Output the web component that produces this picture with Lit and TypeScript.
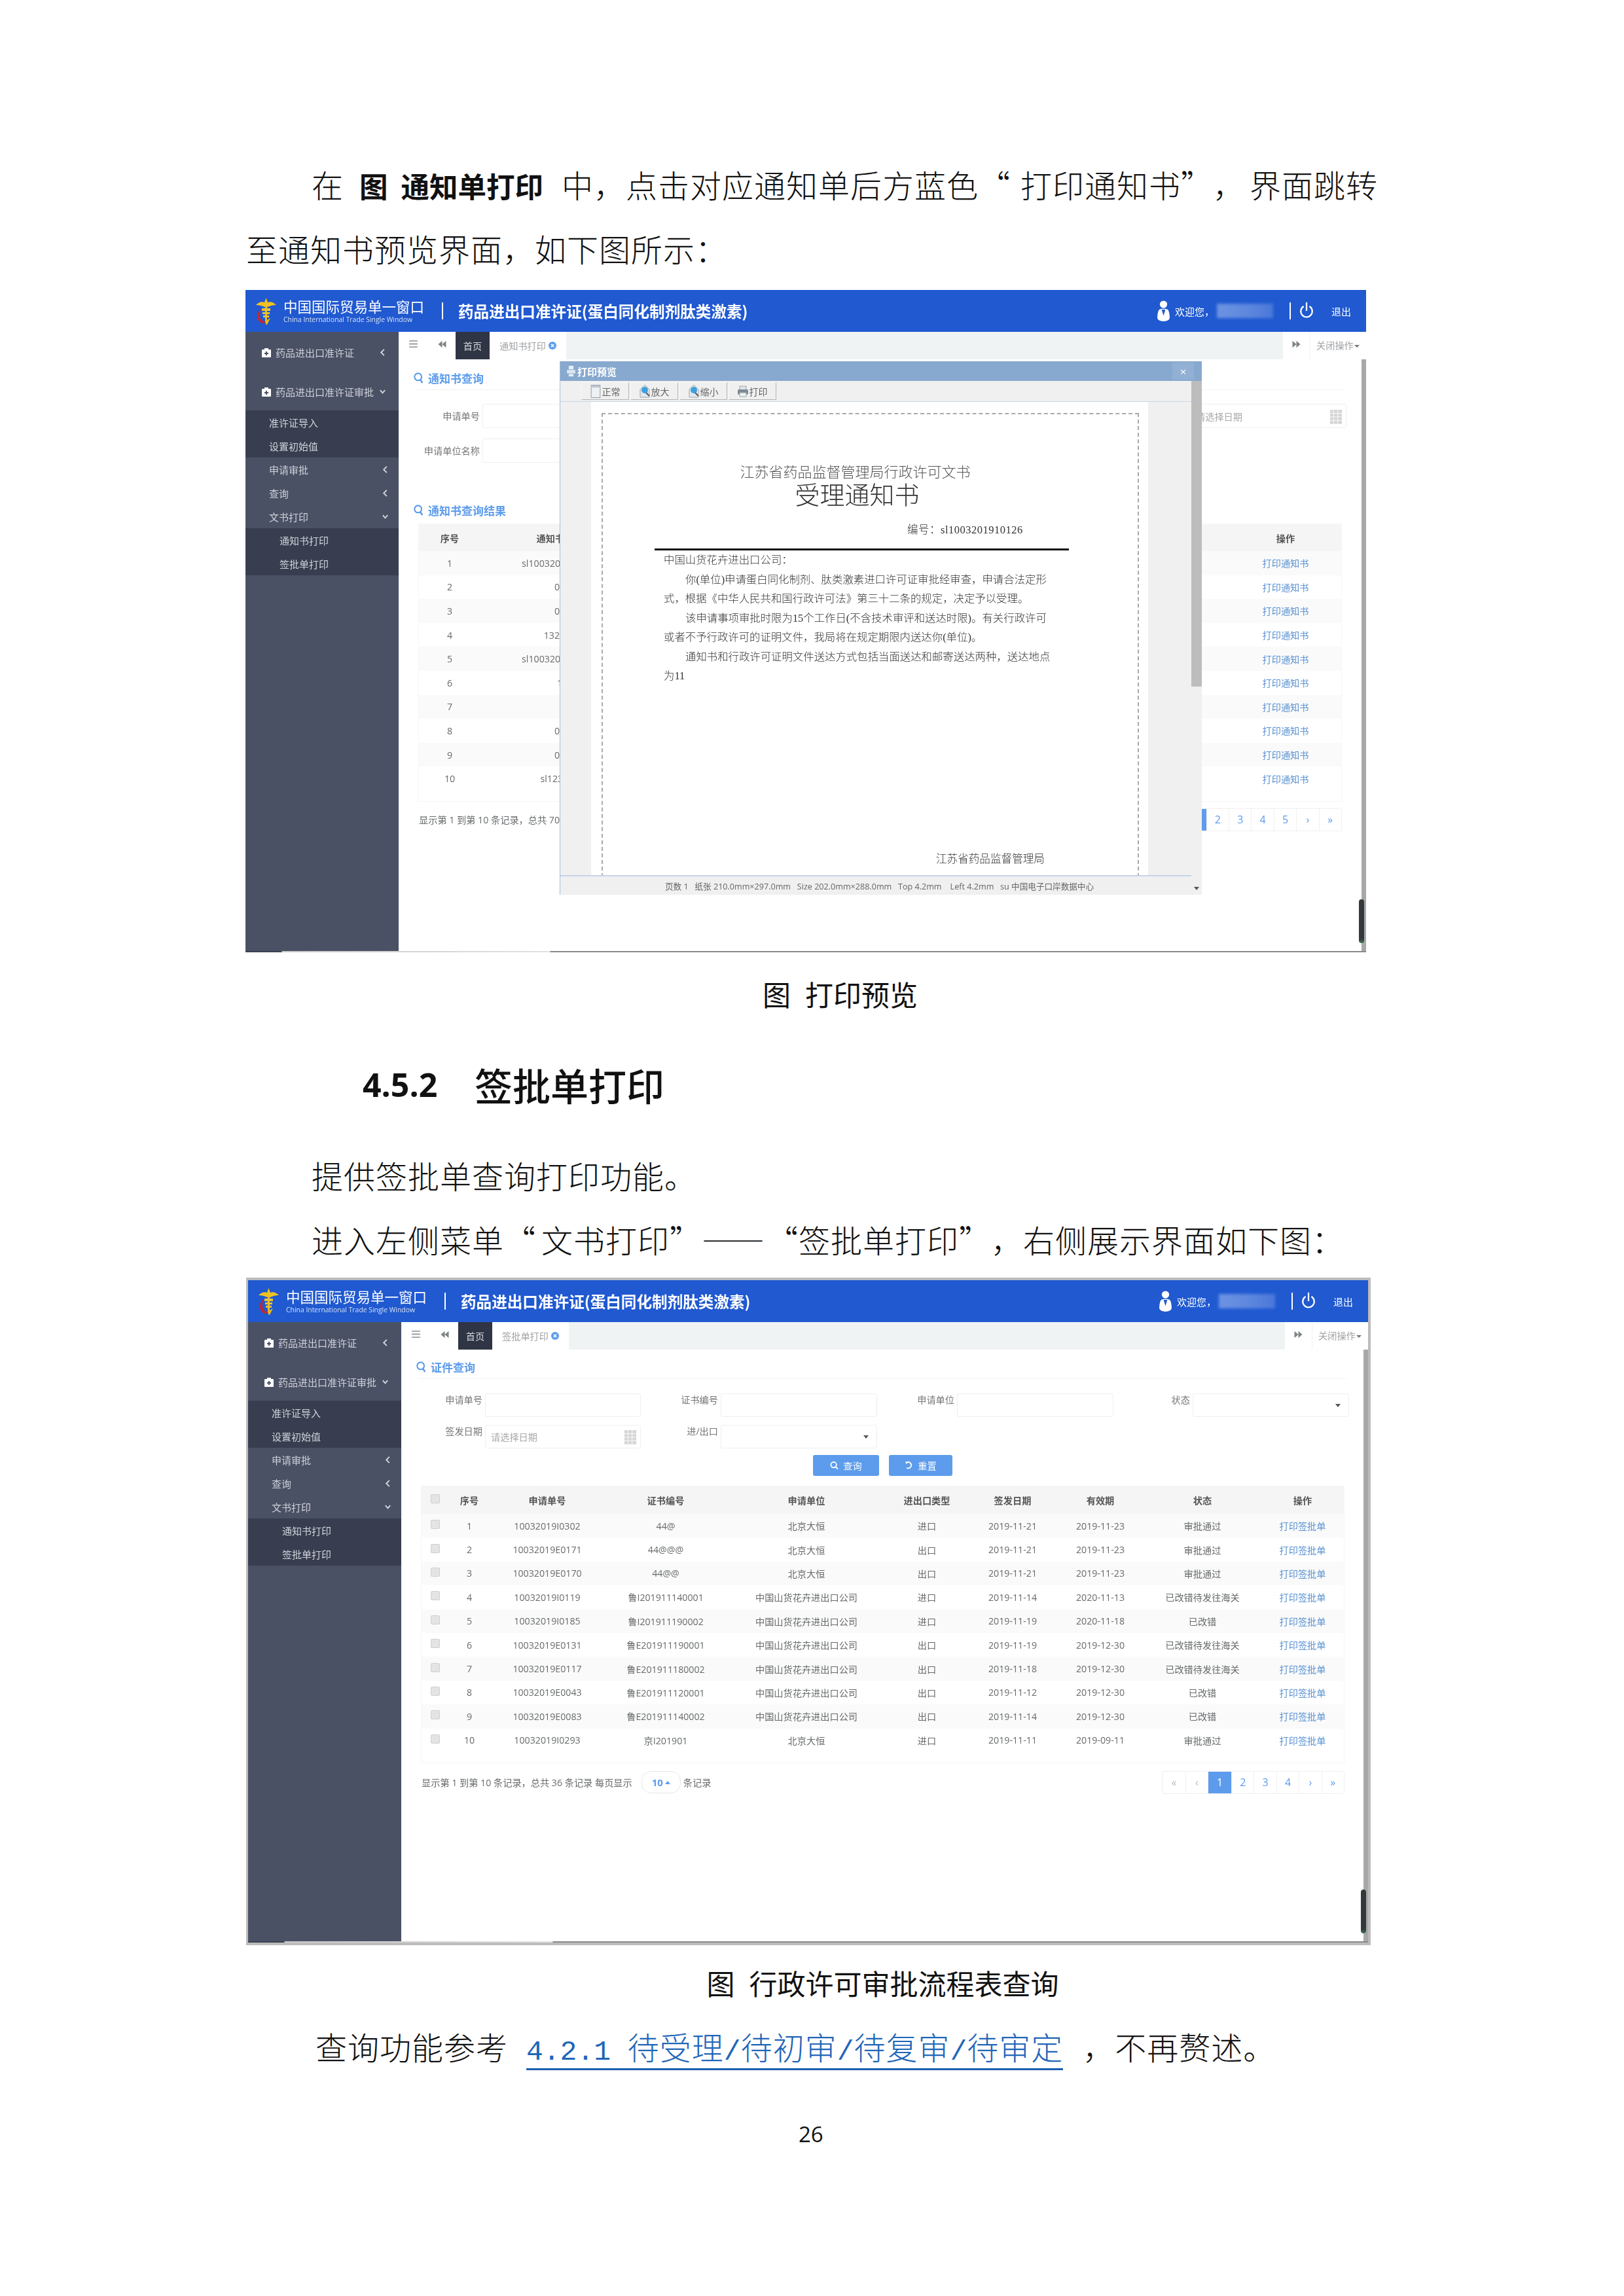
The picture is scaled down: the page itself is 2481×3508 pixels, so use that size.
import { LitElement, html, css } from "lit";
import { customElement } from "lit/decorators.js";

const logo = html`<svg class="logo" viewBox="0 0 31 41">
  <path d="M15.5 0 L18 7 C22 5 27 7 31 11 C26 11 22 12 18 14 L13 14 C9 12 5 11 0 11 C4 7 9 5 13 7 Z" fill="#f2c21f"/>
  <path d="M14 12 h3 v26 h-3z" fill="#e9b91d"/>
  <path d="M9 16 h13 v4 h-13z M10 22 h11 v3 h-11z M11 27 h9 v3 h-9z" fill="#e8c23a"/>
  <path d="M8 17 C1 22 0 32 6 37 C10 40 14 39 17 36 C12 37 8 35 6.5 31 C5 26 6 21 8 17Z" fill="#c9252d"/>
  <path d="M22 31 L14 36 L15.5 41 L17 41 Z" fill="#e9b91d"/>
</svg>`;
const kit = html`<svg class="kit" viewBox="0 0 14 15"><path d="M4 3 V1 h6 v2 h3 a1 1 0 0 1 1 1 v10 a1 1 0 0 1 -1 1 H1 a1 1 0 0 1 -1 -1 V4 a1 1 0 0 1 1 -1z" fill="#fff"/><path d="M6 6 h2 v2 h2 v2 H8 v2 H6 v-2 H4 V8 h2z" fill="#4b5165"/></svg>`;
const left = html`<svg class="chev" viewBox="0 0 10 14"><path d="M7.5 2 L2.5 7 L7.5 12" fill="none" stroke="#d5d7de" stroke-width="2"/></svg>`;
const down = html`<svg class="chev" viewBox="0 0 12 10"><path d="M2 2.5 L6 7 L10 2.5" fill="none" stroke="#d5d7de" stroke-width="2"/></svg>`;
const mag = html`<svg class="mag" viewBox="0 0 18 22"><circle cx="8" cy="9" r="6.5" fill="none" stroke="#5d9cec" stroke-width="2.6"/><path d="M12 14 L16 20" stroke="#5d9cec" stroke-width="3"/></svg>`;
const burger = html`<svg class="burger" viewBox="0 0 14 12"><path d="M0 1 h14 M0 6 h14 M0 11 h14" stroke="#9a9ea3" stroke-width="2"/></svg>`;
const back = html`<svg class="dbl" viewBox="0 0 14 14"><path d="M7 1 V13 L0 7z M14 1 V13 L7 7z" fill="#7e8488"/></svg>`;
const fwd = html`<svg class="dbl" viewBox="0 0 14 14"><path d="M0 1 V13 L7 7z M7 1 V13 L14 7z" fill="#7e8488"/></svg>`;
const user = html`<svg class="user" viewBox="0 0 20 34"><circle cx="10" cy="6.5" r="6" fill="#fff"/><path d="M3 15 C6 13 14 13 17 15 C19 17 20 24 20 28 C20 32 15 34 10 34 C5 34 0 32 0 28 C0 24 1 17 3 15Z" fill="#fff"/><path d="M7 15 L10 25 L13 15" fill="#2059d0"/></svg>`;
const power = html`<svg class="power" viewBox="0 0 24 32"><path d="M7 8 A10 10 0 1 0 17 8" fill="none" stroke="#fff" stroke-width="2.6"/><path d="M12 1 V16" stroke="#fff" stroke-width="2.6"/></svg>`;
const cal = html`<svg class="cal" viewBox="0 0 20 26"><path d="M0 2 h20 v24 h-20z" fill="#d5d5d5"/><path d="M0 8 h20 M0 14 h20 M0 20 h20 M6 2 v24 M13 2 v24" stroke="#f4f4f4" stroke-width="1.4"/></svg>`;
const xdot = html`<svg class="xdot" viewBox="0 0 12 12"><circle cx="6" cy="6" r="6" fill="#5d9cec"/><path d="M3.8 3.8 L8.2 8.2 M8.2 3.8 L3.8 8.2" stroke="#fff" stroke-width="1.6"/></svg>`;
const printer = html`<svg class="tbi" viewBox="0 0 16 18"><rect x="3" y="1" width="10" height="6" fill="#dfe3e8" stroke="#9aa" /><rect x="0" y="6" width="16" height="8" rx="2" fill="#7d8a96"/><rect x="3" y="11" width="10" height="6" fill="#eef0f2" stroke="#9aa"/></svg>`;
const pageIco = html`<svg class="tbi" viewBox="0 0 16 22"><rect x=".5" y=".5" width="15" height="21" fill="#eef1f4" stroke="#8b96a3"/><path d="M0 3 h16" stroke="#b8c2cc" stroke-width="3"/></svg>`;
const zoomIco = html`<svg class="tbi" viewBox="0 0 16 20"><path d="M1 7 L8 0 L15 7 V19 H1z" fill="#e3e7ec" stroke="#9aa"/><circle cx="8" cy="8" r="5" fill="#3f9fe0"/><path d="M10 12 L15 17" stroke="#555" stroke-width="2"/></svg>`;
const titlePrint = html`<svg class="tprint" viewBox="0 0 14 20"><rect x="3" y="1" width="8" height="6" fill="#e8eef6"/><rect x="0" y="8" width="14" height="6" fill="#dbe6f3"/><rect x="3" y="15" width="8" height="4" fill="#e8eef6"/></svg>`;

const row1 = ["sl1003201910126", "01", "02", "132456", "sl1003201910126", "1", "", "03", "04", "sl123456"];

const row2 = [
  ["10032019I0302", "44@", "北京大恒", "进口", "2019-11-21", "2019-11-23", "审批通过"],
  ["10032019E0171", "44@@@", "北京大恒", "出口", "2019-11-21", "2019-11-23", "审批通过"],
  ["10032019E0170", "44@@", "北京大恒", "出口", "2019-11-21", "2019-11-23", "审批通过"],
  ["10032019I0119", "鲁I201911140001", "中国山货花卉进出口公司", "进口", "2019-11-14", "2020-11-13", "已改错待发往海关"],
  ["10032019I0185", "鲁I201911190002", "中国山货花卉进出口公司", "进口", "2019-11-19", "2020-11-18", "已改错"],
  ["10032019E0131", "鲁E201911190001", "中国山货花卉进出口公司", "出口", "2019-11-19", "2019-12-30", "已改错待发往海关"],
  ["10032019E0117", "鲁E201911180002", "中国山货花卉进出口公司", "出口", "2019-11-18", "2019-12-30", "已改错待发往海关"],
  ["10032019E0043", "鲁E201911120001", "中国山货花卉进出口公司", "出口", "2019-11-12", "2019-12-30", "已改错"],
  ["10032019E0083", "鲁E201911140002", "中国山货花卉进出口公司", "出口", "2019-11-14", "2019-12-30", "已改错"],
  ["10032019I0293", "京I201901", "北京大恒", "进口", "2019-11-11", "2019-09-11", "审批通过"],
];
const head2 = ["序号", "申请单号", "证书编号", "申请单位", "进出口类型", "签发日期", "有效期", "状态", "操作"];

@customElement("app-root")
export class AppRoot extends LitElement {
  static styles = css`
    :host { display: block; width: 2481px; height: 3508px; background: #fff; overflow: hidden;
      font-family: "Noto Sans CJK SC", sans-serif; color: #111; }
    * { box-sizing: border-box; }
    .page { display: flex; flex-direction: column; padding-top: 232px; }
    .p { font-size: 48px; letter-spacing: 1px; line-height: 98px; height: 98px; margin-left: 476px; white-space: nowrap; font-weight: 300; text-spacing-trim: space-all; }
    .p.flush { margin-left: 376px; }
    .p b { font-size: 43.5px; letter-spacing: 0; font-weight: 700; }
    .g1 { margin: 0 20px 0 24px; }
    .g2 { margin-right: 28px; }
    .q1 { letter-spacing: 16px; }
    .q2 { letter-spacing: 9px; }
    .q3 { letter-spacing: 8px; }
    .q4 { letter-spacing: 3px; }
    .cap { font-size: 43px; line-height: 60px; height: 60px; text-align: center; white-space: nowrap; }
    .cap i { font-style: normal; margin-right: 22px; }
    .cap.a { margin: 33px 0 0 0; padding-left: 86px; width: 2481px; }
    .cap.b { margin: 27px 0 0 0; padding-left: 216px; width: 2481px; }
    .h { display: flex; align-items: center; height: 80px; margin: 69px 0 49px 554px; }
    .h .n { font: 700 50px "Open Sans", sans-serif; width: 171px; }
    .h .t { font: 500 58px/80px "Noto Sans CJK SC", sans-serif; }
    .last { margin: 37px 0 0 482px; font-size: 48px; font-weight: 300; line-height: 60px; height: 60px; letter-spacing: 1px; white-space: nowrap; text-spacing-trim: space-all; }
    .last a { color: #1f66b8; text-decoration: none; border-bottom: 3px solid #1a5fb0; padding-bottom: 1px; margin: 0 30px 0 28px; display: inline-block; line-height: 46px; }
    .last .m { font-family: "Liberation Mono", monospace; font-size: 43px; letter-spacing: 0; }
    .pn { margin: 85px 0 0 1220px; font: 33px/40px "Open Sans", sans-serif; }

    /* screenshot */
    .shot { position: relative; width: 1712px; display: flex; flex-direction: column; background: #fff; filter: blur(0.55px);
      font-family: "Open Sans", "Noto Sans CJK SC", sans-serif; font-size: 14.2px; color: #676a6c; }
    .frame1 { margin: 15px 0 0 375px; }
    .frame2 { margin: 10px 0 0 376px; width: 1718px; border: solid #bcbcbc; border-width: 4px 4px 4px 3px; }
    .frame2 .shot { margin: 0; width: 1711px; }
    .frame2 .content { padding-top: 12px; }
    .frame2 .foot { margin-top: 12px; }
    .hdr { height: 64px; background: #2059d0; display: flex; align-items: center; padding: 0 23px 0 16px; color: #fff; flex: none; }
    .logo { width: 31px; height: 41px; margin-right: 11px; }
    .brand { display: flex; flex-direction: column; width: 242px; }
    .brand b { font: 400 21.5px/26px "Noto Sans CJK SC", sans-serif; white-space: nowrap; }
    .brand span { font-size: 10.4px; line-height: 14px; white-space: nowrap; color: #d5e0f6; }
    .vs { width: 2px; height: 26px; background: #fff; }
    .t2 { font: 700 23.6px/30px "Noto Sans CJK SC", sans-serif; margin-left: 23px; white-space: nowrap; }
    .hr { margin-left: auto; display: flex; align-items: center; font-size: 15px; }
    .user { width: 19px; height: 32px; margin-right: 8px; }
    .name { width: 86px; height: 22px; margin: 0 25px 0 4px; background: linear-gradient(90deg,#6d93e2,#5c86dd 60%,#4a78da); filter: blur(2px); }
    .power { width: 22px; height: 28px; margin: 0 27px 0 13px; }
    .bodyr { display: flex; height: 946px; }
    .side { width: 234px; background: #4b5165; color: #ced1d9; flex: none; font-size: 15px; }
    .si { display: flex; align-items: center; height: 36px; padding-left: 36px; white-space: nowrap; position: relative; }
    .si .chev { margin-left: auto; margin-right: 15px; }
    .si.top { padding-left: 25px; height: 62px; }
    .si.top.b { height: 58px; }
    .si.top .chev { margin-right: 19px; }
    .si.sub { padding-left: 52px; }
    .dark { background: #383e4f; }
    .kit { width: 14px; height: 15px; margin-right: 7px; flex: none; }
    .chev { width: 11px; height: 13px; flex: none; }
    .main { flex: 1; min-width: 0; position: relative; display: flex; flex-direction: column; }
    .tabs { height: 42px; display: flex; background: #f0f3f4; flex: none; }
    .tabl { width: 87px; background: #fff; display: flex; align-items: flex-start; padding-top: 12px; }
    .burger { width: 13px; height: 11px; margin: 1px 0 0 16px; }
    .dbl { width: 13px; height: 12px; margin: 1px 0 0 31px; }
    .tab { display: flex; align-items: center; justify-content: center; }
    .tab.home { width: 52px; background: #2f3545; color: #d5d7dc; }
    .tab.cur { width: 117px; background: #fff; color: #a0a3a6; gap: 4px; }
    .xdot { width: 12px; height: 12px; }
    .tabr { margin-left: auto; width: 127px; background: #fff; display: flex; align-items: center; color: #a0a3a6; }
    .tabr .dbl { margin: 0 14px 4px 14px; }
    .tabr span { border-left: 1px solid #f0f0f0; height: 42px; line-height: 42px; padding-left: 9px; white-space: nowrap; }
    .caret { display: inline-block; border: 4px solid transparent; border-top-color: #777; border-bottom: 0; vertical-align: middle; margin-left: 1px; }
    .content { flex: 1; display: flex; flex-direction: column; padding: 14px 37px 0 0; }
    .sh { display: flex; align-items: center; margin: 0 -4px 0 26px; height: 33px; border-bottom: 1px solid #f3f3f3; color: #5d9cec; font-size: 17px; font-weight: 700; padding: 0 0 4px 0; }
    .sh.np { border: 0; height: 30px; padding-bottom: 0; margin-top: 57px; margin-bottom: 6px; }
    .mag { width: 15px; height: 19px; margin: 0 7px 0 -3px; }
    .form { display: grid; grid-template-columns: 124px 238px 114px 239px 114px 239px 113px 239px; column-gap: 4px; }
    .f1 { margin-top: 21px; row-gap: 16px; grid-auto-rows: 37px; align-items: center; }
    .f2 { margin-top: 22px; row-gap: 12px; grid-auto-rows: 36px; align-items: start; }
    .lab { text-align: right; white-space: nowrap; line-height: 20px; color: #777; }
    .inp { height: 100%; border: 1px solid #efefef; border-radius: 3px; display: flex; align-items: center; padding: 0 6px 0 8px; color: #a9a9a9; white-space: nowrap; justify-content: space-between; }
    .f2 .inp { height: 36px; }
    .cal { width: 18px; height: 24px; }
    .arr { margin-left: auto; margin-right: 6px; display: block; border: 4px solid transparent; border-top: 5px solid #555; border-bottom: 0; }
    .btns { display: flex; justify-content: center; gap: 15px; margin: 10px 0 15px 31px; }
    .btn { height: 32px; border-radius: 3px; background: #5d9cec; color: #fff; display: flex; align-items: center; justify-content: center; gap: 7px; }
    .btn.q { width: 101px; } .btn.r { width: 97px; }
    .btn svg { width: 13px; height: 14px; }
    .tbl { margin-left: 30px; width: 1411px; border: 1px solid #f6f6f6; padding-bottom: 16px; flex: none; }
    .tr { display: grid; align-items: center; text-align: center; white-space: nowrap; }
    .tr > span { overflow: hidden; }
    .t-a .tr { grid-template-columns: 94px 242px 1fr 170px; height: 36.6px; }
    .t-b .tr { grid-template-columns: 40px 66px 172px 190px 240px 128px 134px 134px 178px 128px; height: 36.4px; }
    .tr.hd { background: #f5f5f5; font-weight: 700; color: #555; height: 41px !important; }
    .t-b .tr.hd { height: 42px !important; }
    .tr.odd { background: #fafafa; }
    .lnk { color: #5b93d3; }
    .cb { width: 14px; height: 14px; background: #e4e4e4; border: 1px solid #d0d0d0; border-radius: 2px; justify-self: center; margin: 0 0 4px 2px; display: block; }
    .foot { display: flex; justify-content: space-between; align-items: center; margin: 10px 0 0 31px; width: 1410px; height: 35px; white-space: nowrap; }
    .fl { display: flex; align-items: center; }
    .ps { display: flex; align-items: center; justify-content: center; width: 60px; height: 34px; border: 1px solid #e6e6e6; border-radius: 15px; margin: 0 4px 0 14px; color: #5d9cec; font-weight: 700; gap: 3px; font-size: 15px; }
    .up { border: 4px solid transparent; border-bottom: 5px solid #5d9cec; border-top: 0; }
    .pager { display: flex; border: 1px solid #efefef; border-radius: 3px; height: 35px; }
    .pager span { width: 34.4px; display: flex; align-items: center; justify-content: center; color: #5d9cec; border-left: 1px solid #f0f0f0; font-size: 16px; }
    .pager span:first-child { border-left: 0; }
    .pager .dim { color: #b9b9b9; }
    .pager .on { background: #5d9cec; color: #fff; width: 36px; }
    .track { position: absolute; right: 0; top: 42px; bottom: 0; width: 7px; background: #a8a8a8; }
    .thumb { position: absolute; right: 3px; bottom: 12px; width: 8px; height: 67px; border-radius: 4px; background: linear-gradient(#33383a 90%, #3f7a52); }
    .bline { height: 2px; background: linear-gradient(90deg,#3c4252 0,#3c4252 55px,#c8c8c8 56px,#e2e2e2 465px,#8a8a8a 466px); flex: none; }

    /* modal */
    .modal { position: absolute; left: 480px; top: 109px; width: 981px; height: 815px; display: flex; flex-direction: column; z-index: 2; border-left: 1px solid #a6bfdc; background: #f0f0f0; }
    .mt { height: 30px; background: #88a9cf; color: #fff; display: flex; align-items: center; font-weight: 700; font-size: 15px; padding-left: 10px; flex: none; }
    .tprint { width: 13px; height: 18px; margin-right: 3px; }
    .mx { margin-left: auto; margin-right: 12px; width: 33px; height: 26px; background: #92b0d3; display: flex; align-items: center; justify-content: center; font-weight: 400; font-size: 17px; }
    .mr { flex: 1; display: flex; min-height: 0; }
    .mc { flex: 1; display: flex; flex-direction: column; min-width: 0; }
    .bar { width: 16px; background: #f0f0f0; flex: none; display: flex; flex-direction: column; }
    .bar i { display: block; height: 467px; background: #bdbdbd; }
    .bar em { margin: auto auto 7px; border: 4px solid transparent; border-top: 5px solid #555; border-bottom: 0; }
    .tb { height: 32px; border-bottom: 1px solid #c6d4e5; display: flex; align-items: center; padding-left: 32px; gap: 2px; flex: none; }
    .tbb { width: 73px; height: 27px; display: flex; align-items: center; justify-content: center; gap: 2px; border: 1px solid; border-color: #f8f8f8 #b5b5b5 #b5b5b5 #f8f8f8; color: #666; font-size: 14px; }
    .tbi { width: 16px; height: 20px; }
    .mv { flex: 1; display: flex; min-height: 0; padding: 0 66px 0 47px; }
    .pg { flex: 1; background: #fff; overflow: hidden; padding: 17px 14px 0 16px; }
    .dash { border: 2px dashed #a9a9a9; border-bottom: 0; height: 900px; padding: 74px 0 0 79px; font-family: "Liberation Serif", "Noto Sans CJK SC", serif; color: #333; font-weight: 300; }
    .d1 { font-size: 22px; line-height: 30px; width: 613px; text-align: center; white-space: nowrap; color: #555; }
    .d2 { font-size: 38px; line-height: 44px; width: 619px; text-align: center; margin-top: -2px; color: #333; }
    .d3 { margin: 21px 0 0 386px; font-size: 16.5px; letter-spacing: .5px; line-height: 20px; white-space: nowrap; }
    .drule { margin-top: 18px; width: 633px; height: 3px; background: #111; }
    .dl { margin-left: 14px; font-size: 16.4px; line-height: 29.5px; white-space: nowrap; }
    .dl.in { margin-left: 47px; }
    .d9 { margin: 255px 0 0 430px; font-size: 16.6px; line-height: 20px; white-space: nowrap; }
    .ms { height: 30px; border-top: 2px solid #c6d4e5; display: flex; align-items: center; padding-left: 160px; color: #666; font-size: 12.6px; white-space: pre; flex: none; }
  `;

  private sidebar() {
    return html`<nav class="side">
      <div class="si top">${kit}药品进出口准许证${left}</div>
      <div class="si top b">${kit}药品进出口准许证审批${down}</div>
      <div class="dark"><div class="si">准许证导入</div><div class="si">设置初始值</div></div>
      <div class="si">申请审批${left}</div>
      <div class="si">查询${left}</div>
      <div class="si">文书打印${down}</div>
      <div class="dark"><div class="si sub">通知书打印</div><div class="si sub">签批单打印</div></div>
    </nav>`;
  }
  private header() {
    return html`<header class="hdr">
      ${logo}
      <div class="brand"><b>中国国际贸易单一窗口</b><span>China International Trade Single Window</span></div>
      <div class="vs"></div>
      <div class="t2">药品进出口准许证(蛋白同化制剂肽类激素)</div>
      <div class="hr">${user}<span>欢迎您，</span><div class="name"></div><div class="vs"></div>${power}<span>退出</span></div>
    </header>`;
  }
  private tabs(name: string) {
    return html`<div class="tabs">
      <div class="tabl">${burger}${back}</div>
      <div class="tab home">首页</div>
      <div class="tab cur">${name}${xdot}</div>
      <div class="tabr">${fwd}<span>关闭操作<i class="caret"></i></span></div>
    </div>`;
  }
  private modal() {
    return html`<section class="modal">
      <div class="mt">${titlePrint}打印预览<span class="mx">×</span></div>
      <div class="mr">
        <div class="mc">
          <div class="tb">
            <div class="tbb">${pageIco}正常</div><div class="tbb">${zoomIco}放大</div>
            <div class="tbb">${zoomIco}缩小</div><div class="tbb">${printer}打印</div>
          </div>
          <div class="mv"><div class="pg"><div class="dash">
            <div class="d1">江苏省药品监督管理局行政许可文书</div>
            <div class="d2">受理通知书</div>
            <div class="d3">编号：sl1003201910126</div>
            <div class="drule"></div>
            <div class="dl">中国山货花卉进出口公司：</div>
            <div class="dl in">你(单位)申请蛋白同化制剂、肽类激素进口许可证审批经审查，申请合法定形</div>
            <div class="dl">式，根据《中华人民共和国行政许可法》第三十二条的规定，决定予以受理。</div>
            <div class="dl in">该申请事项审批时限为15个工作日(不含技术审评和送达时限)。有关行政许可</div>
            <div class="dl">或者不予行政许可的证明文件，我局将在规定期限内送达你(单位)。</div>
            <div class="dl in">通知书和行政许可证明文件送达方式包括当面送达和邮寄送达两种，送达地点</div>
            <div class="dl">为11</div>
            <div class="d9">江苏省药品监督管理局</div>
          </div></div></div>
          <div class="ms">页数 1   纸张 210.0mm×297.0mm   Size 202.0mm×288.0mm   Top 4.2mm    Left 4.2mm   su 中国电子口岸数据中心</div>
        </div>
        <div class="bar"><i></i><em></em></div>
      </div>
    </section>`;
  }
  private first() {
    return html`<div class="shot frame1">
      ${this.header()}
      <div class="bodyr">
        ${this.sidebar()}
        <div class="main">
          ${this.tabs("通知书打印")}
          <div class="content">
            <div class="sh">${mag}通知书查询</div>
            <div class="form f1">
              <div class="lab">申请单号</div><div class="inp"></div>
              <div></div><div></div><div></div><div></div><div></div>
              <div class="inp"><span>请选择日期</span>${cal}</div>
              <div class="lab">申请单位名称</div><div class="inp"></div>
            </div>
            <div class="sh np">${mag}通知书查询结果</div>
            <div class="tbl t-a">
              <div class="tr hd"><span>序号</span><span>通知书编号</span><span></span><span>操作</span></div>
              ${row1.map((v, i) => html`<div class="tr ${i % 2 === 0 ? "odd" : ""}"><span>${i + 1}</span><span>${v}</span><span></span><span class="lnk">打印通知书</span></div>`)}
            </div>
            <div class="foot"><div>显示第 1 到第 10 条记录，总共 70 条记录</div>
              <div class="pager"><span class="dim">«</span><span class="dim">‹</span><span class="on">1</span><span>2</span><span>3</span><span>4</span><span>5</span><span>›</span><span>»</span></div>
            </div>
          </div>
          <div class="track"></div><div class="thumb"></div>
        </div>
      </div>
      <div class="bline"></div>
      ${this.modal()}
    </div>`;
  }
  private second() {
    return html`<div class="frame2"><div class="shot">
      ${this.header()}
      <div class="bodyr">
        ${this.sidebar()}
        <div class="main">
          ${this.tabs("签批单打印")}
          <div class="content">
            <div class="sh">${mag}证件查询</div>
            <div class="form f2">
              <div class="lab">申请单号</div><div class="inp"></div>
              <div class="lab">证书编号</div><div class="inp"></div>
              <div class="lab">申请单位</div><div class="inp"></div>
              <div class="lab">状态</div><div class="inp"><i class="arr"></i></div>
              <div class="lab">签发日期</div><div class="inp"><span>请选择日期</span>${cal}</div>
              <div class="lab">进/出口</div><div class="inp"><i class="arr"></i></div>
            </div>
            <div class="btns">
              <div class="btn q"><svg viewBox="0 0 14 14"><circle cx="6" cy="6" r="4.5" fill="none" stroke="#fff" stroke-width="2"/><path d="M9 9 L13 13" stroke="#fff" stroke-width="2"/></svg>查询</div>
              <div class="btn r"><svg viewBox="0 0 14 14"><path d="M3 2.5 A5 5 0 1 1 3.5 11" fill="none" stroke="#fff" stroke-width="2"/><path d="M1 1 L6 1 L3 5z" fill="#fff"/></svg>重置</div>
            </div>
            <div class="tbl t-b">
              <div class="tr hd"><i class="cb"></i>${head2.map((h) => html`<span>${h}</span>`)}</div>
              ${row2.map((r, i) => html`<div class="tr ${i % 2 === 0 ? "odd" : ""}"><i class="cb"></i><span>${i + 1}</span>${r.map((c) => html`<span>${c}</span>`)}<span class="lnk">打印签批单</span></div>`)}
            </div>
            <div class="foot">
              <div class="fl">显示第 1 到第 10 条记录，总共 36 条记录 每页显示<span class="ps">10<i class="up"></i></span>条记录</div>
              <div class="pager"><span class="dim">«</span><span class="dim">‹</span><span class="on">1</span><span>2</span><span>3</span><span>4</span><span>›</span><span>»</span></div>
            </div>
          </div>
          <div class="track"></div><div class="thumb"></div>
        </div>
      </div>
      <div class="bline"></div>
    </div></div>`;
  }
  render() {
    return html`<main class="page" lang="zh-CN">
      <div class="p">在<b class="g1">图</b><b class="g2">通知单打印</b>中，点击对应通知单后方蓝色<span class="q1">“</span>打印通知书”<span class="q3">，</span>界面跳转</div>
      <div class="p flush">至通知书预览界面，如下图所示：</div>
      ${this.first()}
      <div class="cap a"><i>图</i>打印预览</div>
      <div class="h"><span class="n">4.5.2</span><span class="t">签批单打印</span></div>
      <div class="p">提供签批单查询打印功能。</div>
      <div class="p">进入左侧菜单<span class="q2">“</span>文书打印”<span class="q4">——</span>“签批单打印”，右侧展示界面如下图：</div>
      ${this.second()}
      <div class="cap b"><i>图</i>行政许可审批流程表查询</div>
      <div class="last">查询功能参考<a><span class="m">4.2.1 </span>待受理<span class="m">/</span>待初审<span class="m">/</span>待复审<span class="m">/</span>待审定</a>，不再赘述。</div>
      <div class="pn">26</div>
    </main>`;
  }
}
